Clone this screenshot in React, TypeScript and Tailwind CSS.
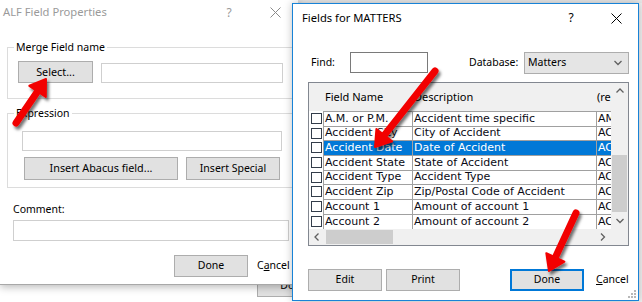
import React from "react";

type P = [number, number];

function Arrow({ tail, tip, hl = 15, hw = 10, sw = 7 }: { tail: P; tip: P; hl?: number; hw?: number; sw?: number }) {
  const dx = tip[0] - tail[0];
  const dy = tip[1] - tail[1];
  const len = Math.hypot(dx, dy);
  const ux = dx / len;
  const uy = dy / len;
  const nx = -uy;
  const ny = ux;
  const bx = tip[0] - ux * hl;
  const by = tip[1] - uy * hl;
  const pts = [
    [tip[0], tip[1]],
    [bx + nx * hw, by + ny * hw],
    [bx - nx * hw, by - ny * hw],
  ]
    .map((p) => p.map((v) => v.toFixed(1)).join(","))
    .join(" ");
  return (
    <g filter="url(#ashadow)">
      <line x1={tail[0]} y1={tail[1]} x2={bx + ux * 3} y2={by + uy * 3} stroke="#f20000" strokeWidth={sw} strokeLinecap="round" />
      <polygon points={pts} fill="#f20000" stroke="#f20000" strokeWidth={2} strokeLinejoin="round" />
    </g>
  );
}

function XIcon({ c }: { c: string }) {
  return (
    <svg width="11" height="11" viewBox="0 0 11 11">
      <path d="M0.5 0.5L10.5 10.5M10.5 0.5L0.5 10.5" stroke={c} strokeWidth="1" fill="none" />
    </svg>
  );
}

function Chev({ dir }: { dir: "up" | "down" | "left" | "right" }) {
  const d =
    dir === "up"
      ? "M0.5 4.5L4 1L7.5 4.5"
      : dir === "down"
      ? "M0.5 1L4 4.5L7.5 1"
      : dir === "left"
      ? "M4.5 0.5L1 4L4.5 7.5"
      : "M1 0.5L4.5 4L1 7.5";
  const horiz = dir === "up" || dir === "down";
  return (
    <svg width={horiz ? 8 : 6} height={horiz ? 6 : 8} viewBox={horiz ? "0 0 8 6" : "0 0 6 8"}>
      <path d={d} stroke="#606060" strokeWidth="1.3" fill="none" />
    </svg>
  );
}

const rows: { name: string; desc: string; code: string; h: string; sel?: boolean }[] = [
  { name: "A.M. or P.M.", desc: "Accident time specific", code: "AM_PM", h: "h-[15px]" },
  { name: "Accident City", desc: "City of Accident", code: "ACC_CITY", h: "h-[14px]" },
  { name: "Accident Date", desc: "Date of Accident", code: "ACC_DATE", h: "h-[15px]", sel: true },
  { name: "Accident State", desc: "State of Accident", code: "ACC_STATE", h: "h-[15px]" },
  { name: "Accident Type", desc: "Accident Type", code: "ACC_TYPE", h: "h-[14px]" },
  { name: "Accident Zip", desc: "Zip/Postal Code of Accident", code: "ACC_ZIP", h: "h-[15px]" },
  { name: "Account 1", desc: "Amount of account 1", code: "ACCT1", h: "h-[15px]" },
  { name: "Account 2", desc: "Amount of account 2", code: "ACCT2", h: "h-[15px]" },
];

export default function App() {
  return (
    <div className="relative w-[642px] h-[302px] overflow-hidden bg-[#f0f0f0] font-['Noto_Sans',sans-serif] text-black">
      {/* window behind */}
      <div className="absolute left-0 top-0 w-[300px] h-[302px] bg-white">
        <div className="pt-[275px] pl-[257px]">
          <div className="w-[73px] h-[22px] bg-[#e1e1e1] border border-[#adadad] flex items-center justify-center text-[10.5px]">
            Done
          </div>
        </div>
      </div>

      {/* strip behind right dialog at top */}
      <div className="absolute left-[297px] top-0 w-[345px] h-[3px] bg-[#e8e8e8] border-l border-[#9a9a9a]" />

      {/* Left dialog: ALF Field Properties */}
      <div className="absolute left-0 top-0 w-[298px] h-[284px] bg-white shadow-[0_1px_0_#a8a8a8,0_3px_8px_rgba(0,0,0,0.28)] flex flex-col">
        <div className="flex h-[25px] items-center">
          <div className="flex-1 pl-[3px] text-[11.2px] text-[#9a9a9a]">ALF Field Properties</div>
          <div className="w-[46px] text-center text-[12px] text-[#9a9a9a]">?</div>
          <div className="w-[46px] flex justify-center">
            <XIcon c="#8a8a8a" />
          </div>
        </div>

        {/* Merge Field name group */}
        <div className="relative ml-[7px] mt-[22px] w-[287px] h-[52px] border border-[#dcdcdc]">
          <span className="absolute -top-[9px] left-[6px] bg-white px-[2px] text-[10.5px] leading-[16px]">Merge Field name</span>
          <div className="flex pl-[10px] pt-[13px] gap-[8px]">
            <div className="w-[75px] h-[22px] bg-[#e1e1e1] border border-[#adadad] flex items-center justify-center text-[10.8px]">
              Select...
            </div>
            <div className="mt-[2px] w-[182px] h-[20px] border border-[#cfcfcf] bg-white" />
          </div>
        </div>

        {/* Expression group */}
        <div className="relative ml-[7px] mt-[14px] w-[287px] h-[75px] border border-[#dcdcdc]">
          <span className="absolute -top-[9px] left-[6px] bg-white px-[2px] text-[10.5px] leading-[16px]">Expression</span>
          <div className="pl-[14px] pt-[17px]">
            <div className="w-[260px] h-[20px] border border-[#cfcfcf] bg-white" />
          </div>
          <div className="flex pl-[16px] pt-[6px] gap-[8px]">
            <div className="w-[154px] h-[23px] bg-[#e1e1e1] border border-[#adadad] flex items-center justify-center text-[10.8px]">
              Insert Abacus field...
            </div>
            <div className="w-[94px] h-[23px] bg-[#e1e1e1] border border-[#adadad] flex items-center justify-center text-[10.5px]">
              Insert Special
            </div>
          </div>
        </div>

        <div className="ml-[13px] mt-[13px] text-[10.5px] leading-[16px]">Comment:</div>
        <div className="ml-[13px] mt-[3px] w-[276px] h-[21px] border border-[#cfcfcf] bg-white" />

        <div className="flex items-center mt-[14px] pl-[174px]">
          <div className="w-[74px] h-[22px] bg-[#e1e1e1] border border-[#adadad] flex items-center justify-center text-[10.5px]">
            Done
          </div>
          <div className="ml-[9px] text-[10.5px]">
            C<span className="underline">a</span>ncel
          </div>
        </div>
      </div>

      {/* Right dialog: Fields for MATTERS */}
      <div className="absolute left-[292px] top-[3px] w-[347px] h-[298px] border border-[#1883d7] bg-white flex flex-col shadow-[0_0_8px_rgba(0,0,0,0.25)]">
        <div className="flex h-[28px] items-center">
          <div className="flex-1 pl-[9px] text-[11.2px]">Fields for MATTERS</div>
          <div className="w-[46px] text-center text-[12px]">?</div>
          <div className="w-[44px] flex justify-center">
            <XIcon c="#000" />
          </div>
        </div>

        {/* Find row */}
        <div className="flex items-center mt-[20px] h-[21px]">
          <div className="ml-[18px] w-[39px] text-[10.5px]">Find:</div>
          <div className="w-[78px] h-[21px] border border-[#7a7a7a] bg-white" />
          <div className="ml-[41px] w-[55px] text-[10.5px]">Database:</div>
          <div className="w-[105px] h-[22px] bg-[#e5e5e5] border border-[#adadad] flex items-center justify-between pl-[3px] pr-[6px] text-[10.5px]">
            <span>Matters</span>
            <Chev dir="down" />
          </div>
        </div>

        {/* Table */}
        <div className="ml-[15px] mt-[9px] w-[321px] h-[164px] border border-[#828790] flex">
          <div className="w-[302px] flex flex-col">
            <div className="h-[28px] bg-[#f0f0f0] flex items-center text-[11px]">
              <div className="w-[14px]" />
              <div className="w-[89px] pl-[2px]">Field Name</div>
              <div className="w-[184px] pl-[2px]">Description</div>
              <div className="w-[15px] pl-[1px] overflow-hidden whitespace-nowrap">(re</div>
            </div>
            <div className="flex flex-col font-['DejaVu_Sans',sans-serif] text-[11px]">
              {rows.map((r) => (
                <div key={r.name} className={`flex ${r.h}`}>
                  <div className="w-[14px] flex items-center pl-[2px] bg-white">
                    <div className="w-[11px] h-[11px] border border-[#333d4a] bg-white" />
                  </div>
                  <div
                    className={`w-[89px] border-l border-t border-[#a0a0a0] pl-[1px] flex items-center whitespace-nowrap overflow-hidden ${
                      r.sel ? "bg-[#0078d7] text-white" : "text-[#0a0a14]"
                    }`}
                  >
                    {r.name}
                  </div>
                  <div
                    className={`w-[184px] border-l border-t border-[#a0a0a0] pl-[1px] flex items-center whitespace-nowrap overflow-hidden ${
                      r.sel ? "bg-[#0078d7] text-white" : "text-[#0a0a14]"
                    }`}
                  >
                    {r.desc}
                  </div>
                  <div
                    className={`w-[15px] border-l border-t border-[#a0a0a0] pl-[1px] flex items-center whitespace-nowrap overflow-hidden ${
                      r.sel ? "bg-[#0078d7] text-white" : "text-[#0a0a14]"
                    }`}
                  >
                    {r.code.slice(0, 2)}
                  </div>
                </div>
              ))}
            </div>
            {/* horizontal scrollbar */}
            <div className="mt-auto h-[16px] bg-[#f0f0f0] flex items-center">
              <div className="w-[16px] flex justify-center">
                <Chev dir="left" />
              </div>
              <div className="ml-[1px] w-[67px] h-[14px] bg-[#cdcdcd]" />
              <div className="flex-1" />
              <div className="w-[16px] flex justify-center">
                <Chev dir="right" />
              </div>
            </div>
          </div>
          {/* vertical scrollbar */}
          <div className="w-[17px] flex flex-col bg-[#f0f0f0]">
            <div className="h-[16px] flex items-center justify-center">
              <Chev dir="up" />
            </div>
            <div className="h-[56px]" />
            <div className="h-[57px] px-[1px]">
              <div className="h-full bg-[#cdcdcd]" />
            </div>
            <div className="h-[1px]" />
            <div className="h-[16px] flex items-center justify-center">
              <Chev dir="down" />
            </div>
            <div className="flex-1" />
          </div>
        </div>

        {/* Bottom buttons */}
        <div className="flex items-center mt-[23px] pl-[15px]">
          <div className="w-[74px] h-[22px] bg-[#e1e1e1] border border-[#adadad] flex items-center justify-center text-[10.5px]">
            Edit
          </div>
          <div className="ml-[4px] w-[74px] h-[22px] bg-[#e1e1e1] border border-[#adadad] flex items-center justify-center text-[10.5px]">
            Print
          </div>
          <div className="ml-[50px] w-[74px] h-[22px] bg-[#e1e1e1] border-2 border-[#0078d7] flex items-center justify-center text-[10.5px]">
            Done
          </div>
          <div className="ml-[12px] text-[10.5px]">
            <span className="underline">C</span>ancel
          </div>
        </div>

        {/* resize grip */}
        <svg className="absolute right-[1px] bottom-[1px]" width="10" height="10" viewBox="0 0 10 10">
          {[
            [8, 2],
            [8, 5],
            [5, 5],
            [8, 8],
            [5, 8],
            [2, 8],
          ].map(([x, y]) => (
            <rect key={`${x}-${y}`} x={x - 1} y={y - 1} width="2" height="2" fill="#b8b8b8" />
          ))}
        </svg>
      </div>

      {/* Red arrows overlay */}
      <svg className="absolute inset-0 pointer-events-none" width="642" height="302" viewBox="0 0 642 302">
        <defs>
          <filter id="ashadow" x="-50%" y="-50%" width="200%" height="200%">
            <feDropShadow dx="2" dy="3" stdDeviation="1.5" floodColor="#000" floodOpacity="0.55" />
          </filter>
        </defs>
        <Arrow tail={[16, 123]} tip={[46, 79]} />
        <Arrow tail={[435, 71]} tip={[375, 147]} />
        <Arrow tail={[576, 213]} tip={[549, 271]} />
      </svg>
    </div>
  );
}
